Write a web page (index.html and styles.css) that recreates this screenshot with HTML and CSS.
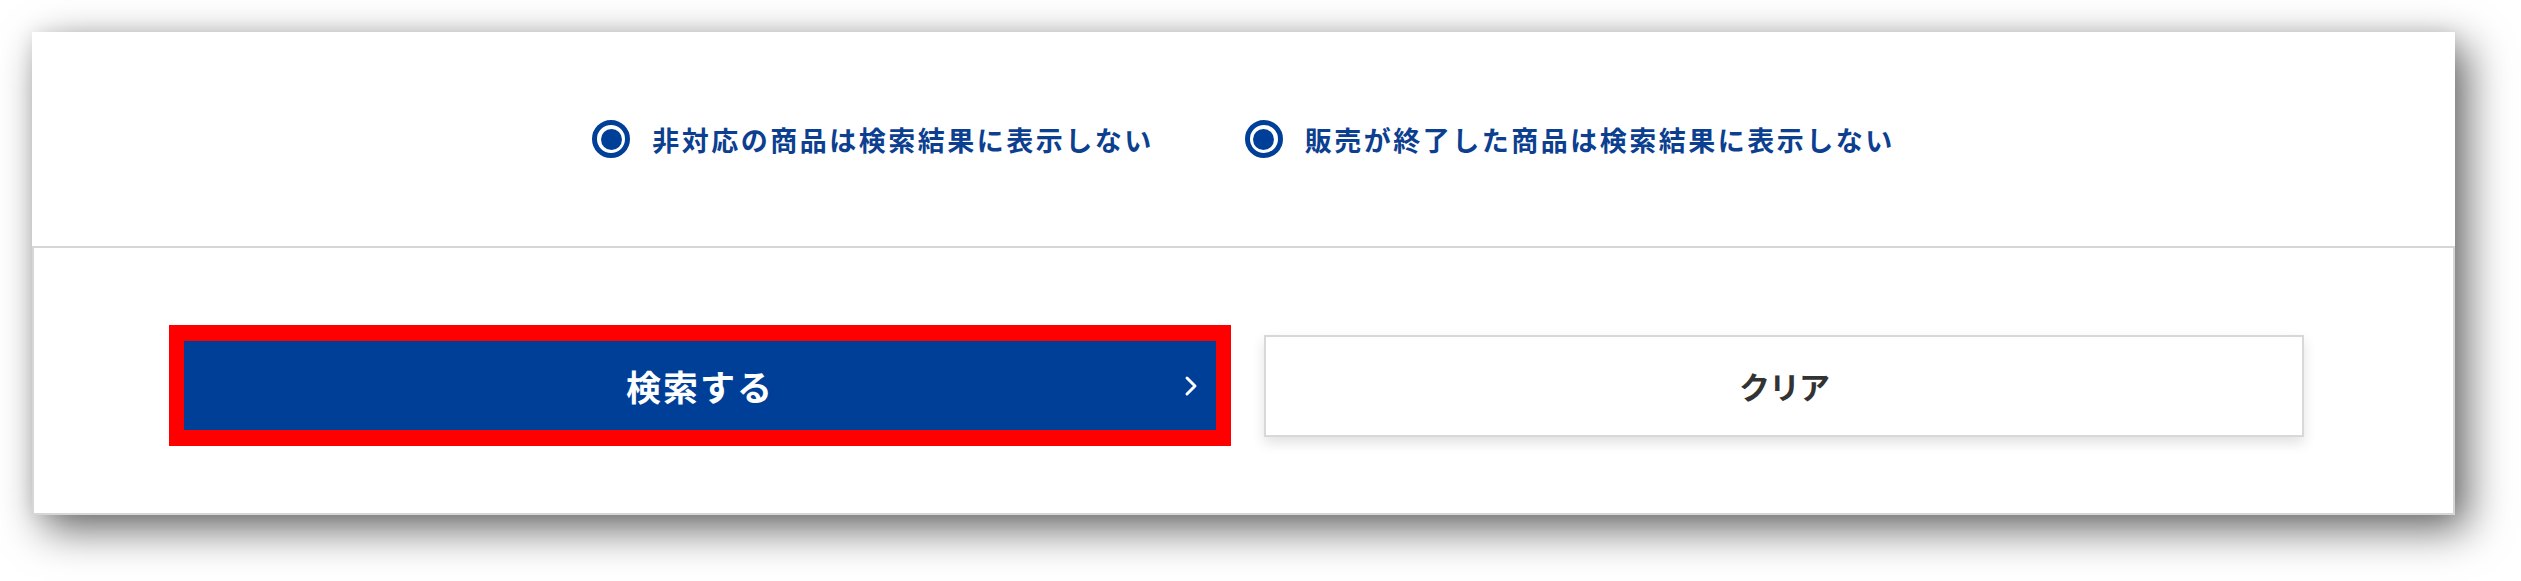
FILE: index.html
```html
<!DOCTYPE html>
<html lang="ja">
<head>
    <meta charset="UTF-8">
    <title>検索オプション</title>
    <link rel="stylesheet" href="styles.css">
</head>
<body>

    <!-- 検索フォームの下部 -->
    <div class="search_panel">

        <!-- 絞り込みオプション -->
        <div class="filter_row">
            <label class="radio_item">
                <span class="radio_mark"></span>
                <span class="radio_text">非対応の商品は検索結果に表示しない</span>
            </label>
            <label class="radio_item">
                <span class="radio_mark"></span>
                <span class="radio_text">販売が終了した商品は検索結果に表示しない</span>
            </label>
        </div>

        <!-- ボタン -->
        <div class="button_row">
            <div class="highlight">
                <button class="btn_search" type="submit">
                    <span class="btn_label">検索する</span>
                    <svg class="chevron" width="14" height="22" viewBox="0 0 14 22">
                        <polyline points="3,3 11,11 3,19" fill="none" stroke="#fff" stroke-width="3" stroke-linecap="round" stroke-linejoin="round"/>
                    </svg>
                </button>
            </div>
            <button class="btn_clear" type="reset">クリア</button>
        </div>

    </div>

</body>
</html>
```

FILE: styles.css
```css
/* ページ全体 */
body {
    margin: 0;
    padding: 32px 0 66px 32px;
    background-color: #fff;
    font-family: "Noto Sans CJK JP", "Noto Sans", sans-serif;
}
.search_panel {
    width: 2423px;
    background-color: #fff;
    box-shadow: 12px 14px 40px rgba(0, 0, 0, 0.6), 0 0 16px rgba(0, 0, 0, 0.08);
}

/* ラジオボタンの行 */
.filter_row {
    height: 214px;
    display: flex;
    justify-content: center;
    align-items: center;
    gap: 91px;
}
.radio_item {
    display: flex;
    align-items: center;
    gap: 22px;
    cursor: pointer;
}
.radio_mark {
    width: 38px;
    height: 38px;
    box-sizing: border-box;
    border: 5px solid #003f98;
    border-radius: 50%;
    display: flex;
    justify-content: center;
    align-items: center;
}
.radio_mark::after {
    content: "";
    width: 21px;
    height: 21px;
    border-radius: 50%;
    background-color: #003f98;
}
.radio_text {
    font-size: 27px;
    font-weight: 700;
    letter-spacing: 2.5px;
    color: #0d3f90;
}

/* ボタンの行 */
.button_row {
    display: flex;
    align-items: center;
    gap: 33px;
    padding: 77px 149px 67px 135px;
    border: 2px solid #d6d6d6;
}
.highlight {
    border-style: solid;
    border-color: #ff0000;
    border-width: 16px 15px;
}
.btn_search {
    width: 1032px;
    height: 89px;
    display: grid;
    grid-template-columns: 1fr auto 1fr;
    align-items: center;
    padding: 0 18px;
    border: none;
    background-color: #003f98;
    color: #fff;
    font-family: inherit;
    cursor: pointer;
}
.btn_label {
    grid-column: 2;
    font-size: 35px;
    font-weight: 700;
    letter-spacing: 2px;
}
.chevron {
    grid-column: 3;
    justify-self: end;
}
.btn_clear {
    width: 1040px;
    height: 102px;
    border: 2px solid #d8d8d8;
    background-color: #fff;
    box-shadow: 0 6px 12px rgba(0, 0, 0, 0.12);
    color: #333;
    font-family: inherit;
    font-size: 31px;
    font-weight: 700;
    letter-spacing: -1px;
    cursor: pointer;
}
```
